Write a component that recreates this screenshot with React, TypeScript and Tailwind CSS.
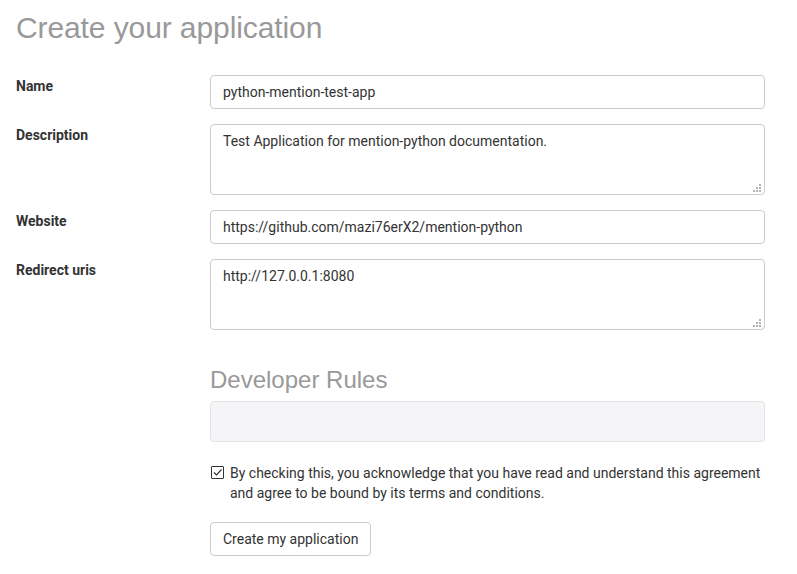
import React from "react";

const inputCls =
  "w-[555px] h-[34px] rounded-[4px] border border-[#cccccc] bg-white px-3 text-[14px] text-[#333333] outline-none";
const areaCls =
  "w-[555px] h-[71px] rounded-[4px] border border-[#cccccc] bg-white px-3 py-[6px] text-[14px] leading-[20px] text-[#333333] outline-none resize-none block";

function Row({ label, children }: { label: string; children: React.ReactNode }) {
  return (
    <div className="flex mb-[15px]">
      <div className="w-[194px] shrink-0 pt-[1px] font-bold text-[14px] leading-[20px] text-[#333333]">{label}</div>
      <div>{children}</div>
    </div>
  );
}

function Area({ value }: { value: string }) {
  return (
    <div className="relative">
      <textarea className={areaCls} defaultValue={value} />
      <svg className="absolute right-[4px] bottom-[3px]" width="9" height="9" viewBox="0 0 9 9">
        <g fill="#b3b3b3">
          <rect x="7" y="1" width="2" height="2" />
          <rect x="4" y="4" width="2" height="2" />
          <rect x="7" y="4" width="2" height="2" />
          <rect x="1" y="7" width="2" height="2" />
          <rect x="4" y="7" width="2" height="2" />
          <rect x="7" y="7" width="2" height="2" />
        </g>
      </svg>
    </div>
  );
}

export default function App() {
  return (
    <div
      className="bg-white w-[797px] h-[574px] overflow-hidden pl-[16px] text-[14px] leading-[20px] text-[#333333]"
      style={{ fontFamily: "Roboto, 'Liberation Sans', sans-serif" }}
    >
      <h1
        className="pt-[10px] text-[30px] leading-[36px] text-[#999999] mb-[29px] tracking-[-0.1px]"
        style={{ fontFamily: "'Liberation Sans', Arial, sans-serif" }}
      >
        Create your application
      </h1>
      <Row label="Name">
        <input className={inputCls} defaultValue="python-mention-test-app" />
      </Row>
      <Row label="Description">
        <Area value="Test Application for mention-python documentation." />
      </Row>
      <Row label="Website">
        <input className={inputCls} defaultValue="https://github.com/mazi76erX2/mention-python" />
      </Row>
      <Row label="Redirect uris">
        <Area value="http://127.0.0.1:8080" />
      </Row>
      <div className="ml-[194px]">
        <h2
          className="mt-[36px] text-[24px] leading-[28px] text-[#999999]"
          style={{ fontFamily: "'Liberation Sans', Arial, sans-serif" }}
        >
          Developer Rules
        </h2>
        <div className="mt-[7px] w-[555px] h-[41px] rounded-[4px] border border-[#e3e3e3] bg-[#f5f5f7]" />
        <div className="mt-[21px] flex items-start">
          <div className="mt-[3px] ml-[1px] w-[13px] h-[13px] border border-[#333333] rounded-[1px] flex items-center justify-center shrink-0">
            <svg width="11" height="11" viewBox="0 0 11 11">
              <path d="M2 5.5 L4.5 8 L9.5 2.5" fill="none" stroke="#333333" strokeWidth="1.2" />
            </svg>
          </div>
          <p className="ml-[6px] w-[540px]">
            By checking this, you acknowledge that you have read and understand this agreement and agree to be
            bound by its terms and conditions.
          </p>
        </div>
        <button className="mt-[19px] h-[34px] px-[12px] rounded-[4px] border border-[#cccccc] bg-white text-[14px] text-[#333333]">
          Create my application
        </button>
      </div>
    </div>
  );
}
